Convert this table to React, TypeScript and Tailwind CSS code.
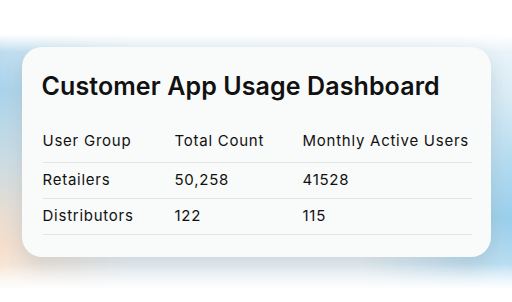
const ROWS = [
  { group: "Retailers", total: "50,258", mau: "41528" },
  { group: "Distributors", total: "122", mau: "115" },
];

export default function App() {
  return (
    <div className="relative w-[512px] h-[302px] overflow-hidden bg-white font-['Inter','Noto_Sans',sans-serif] text-[#111]">
      {/* soft coloured band behind the card */}
      <div className="absolute inset-x-0 top-[34px] h-[256px] [mask-image:linear-gradient(to_bottom,transparent_0,black_18px,black_calc(100%-26px),transparent)]">
        <div className="absolute inset-0 bg-[linear-gradient(to_bottom,#e3eff6_0%,#eaf3f8_60%,#eef6fa_100%)]" />
        <div className="absolute inset-y-0 left-0 w-[130px] bg-[linear-gradient(to_bottom,#c4e0ef_0%,#a9d3ec_22%,#c9dce4_48%,#e6ddd3_68%,#f5decb_82%,#f8ebe0_100%)] [mask-image:linear-gradient(to_right,black_0%,rgba(0,0,0,0.6)_35%,transparent_100%)]" />
        <div className="absolute inset-y-0 right-0 w-[150px] bg-[linear-gradient(to_bottom,#eef6fa_0%,#d9ecf6_25%,#b4dcf1_50%,#98cfec_72%,#b6ddf2_90%,#d6ecf8_100%)] [mask-image:linear-gradient(to_left,black_0%,rgba(0,0,0,0.7)_30%,transparent_100%)]" />
      </div>

      <div className="relative flex justify-center pt-[47px]">
        <div className="w-[469px] rounded-[20px] bg-[#f9fafa] pl-[20px] pr-[19px] pt-[21px] pb-[22px] shadow-[0_10px_22px_rgba(50,65,75,0.16)]">
          <h1 className="mt-[2px] h-[32px] text-[25px] leading-[32px] font-semibold tracking-[0.1px]">
            Customer App Usage Dashboard
          </h1>
          <div className="mt-[25px] pl-[1px] text-[15px] tracking-[0.75px]">
            <div className="flex h-[36px] items-center pb-[6px] border-b border-[#e2e4e5]">
              <div className="w-[132px]">User Group</div>
              <div className="w-[128px]">Total Count</div>
              <div className="flex-1">Monthly Active Users</div>
            </div>
            {ROWS.map((r) => (
              <div key={r.group} className="flex h-[36px] items-center border-b border-[#e2e4e5]">
                <div className="w-[132px]">{r.group}</div>
                <div className="w-[128px]">{r.total}</div>
                <div className="flex-1">{r.mau}</div>
              </div>
            ))}
          </div>
        </div>
      </div>
    </div>
  );
}
